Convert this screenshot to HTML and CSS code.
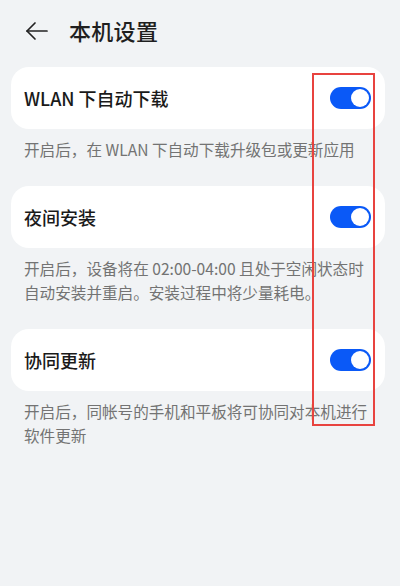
FILE: index.html
```html
<!DOCTYPE html>
<html lang="zh-CN">
<head>
<meta charset="utf-8">
<title>本机设置</title>
<link rel="stylesheet" href="styles.css">
</head>
<body>
<div class="page">
  <header class="topbar">
    <button class="back" aria-label="返回">
      <svg width="24" height="20" viewBox="0 0 24 20" fill="none" stroke="#222" stroke-width="1.7" stroke-linecap="round" stroke-linejoin="round">
        <path d="M2 10 H22"/>
        <path d="M10 2 L2 10 L10 18"/>
      </svg>
    </button>
    <h1 class="title">本机设置</h1>
  </header>

  <main class="list">
    <section class="group">
      <div class="card">
        <span class="label">WLAN 下自动下载</span>
        <span class="switch on"><span class="knob"></span></span>
      </div>
      <p class="hint">开启后，在 WLAN 下自动下载升级包或更新应用</p>
    </section>

    <section class="group">
      <div class="card">
        <span class="label">夜间安装</span>
        <span class="switch on"><span class="knob"></span></span>
      </div>
      <p class="hint">开启后，设备将在 02:00-04:00 且处于空闲状态时自动安装并重启。安装过程中将少量耗电。</p>
    </section>

    <section class="group">
      <div class="card">
        <span class="label">协同更新</span>
        <span class="switch on"><span class="knob"></span></span>
      </div>
      <p class="hint">开启后，同帐号的手机和平板将可协同对本机进行软件更新</p>
    </section>
  </main>

  <div class="mark"></div>
</div>
</body>
</html>
```

FILE: styles.css
```css
* {
  box-sizing: border-box;
}

html, body {
  margin: 0;
  padding: 0;
}

body {
  background: #f1f3f5;
  font-family: "Noto Sans CJK SC", "Noto Sans", sans-serif;
  color: #1a1a1a;
}

.page {
  position: relative;
  width: 400px;
  height: 586px;
  overflow: hidden;
}

.topbar {
  height: 60px;
  display: flex;
  align-items: center;
  padding-left: 25px;
}

.back {
  display: flex;
  align-items: center;
  justify-content: center;
  width: 24px;
  height: 24px;
  padding: 0;
  margin: 2px 20px 0 0;
  border: 0;
  background: none;
}

.title {
  margin: 0;
  font-size: 22px;
  font-weight: 500;
  color: #1f1f1f;
  letter-spacing: 0.3px;
}

.list {
  padding: 7px 15px 0 11px;
}

.card {
  height: 62px;
  background: #fff;
  border-radius: 18px;
  display: flex;
  align-items: center;
  justify-content: space-between;
  padding: 0 14px 0 13px;
}

.label {
  font-size: 18px;
  font-weight: 500;
  color: #1a1a1a;
}

.switch {
  width: 41px;
  height: 22px;
  border-radius: 11px;
  background: #d6d8db;
  display: flex;
  align-items: center;
  padding: 2px;
}

.switch.on {
  background: #0a59f7;
  justify-content: flex-end;
}

.knob {
  width: 18px;
  height: 18px;
  border-radius: 50%;
  background: #fff;
}

.hint {
  margin: 0;
  padding: 8px 0 25px 13px;
  font-size: 15.6px;
  line-height: 24px;
  color: #737373;
  width: 365px;
}

.mark {
  position: absolute;
  left: 312px;
  top: 73px;
  width: 63px;
  height: 353px;
  border: 2px solid #e8433f;
}
```
